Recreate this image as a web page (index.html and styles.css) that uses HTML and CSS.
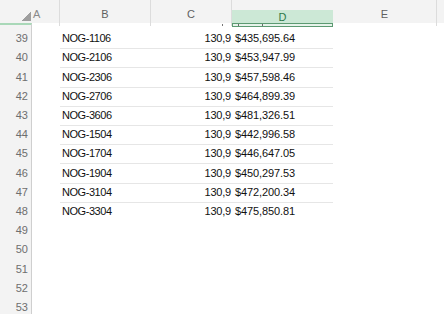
FILE: index.html
```html
<!DOCTYPE html>
<html>
<head>
<meta charset="utf-8">
<link rel="stylesheet" href="styles.css">
</head>
<body>
<div class="sheet">
  <div class="hdr">
    <div class="corner"><span class="tri"></span></div>
    <div class="ch cha">A</div>
    <div class="ch">B</div>
    <div class="ch">C</div>
    <div class="ch chd"><span>D</span></div>
    <div class="ch">E</div>
    <div class="ch last"></div>
  </div>
  <div class="strip">
    <div class="rh38"></div>
    <div class="sc"></div>
    <div class="sc"></div>
    <div class="sc scc"><i class="tick"></i></div>
    <div class="sc sd"><i class="t1"></i><i class="t2"></i></div>
    <div class="sc"></div>
  </div>
  <div class="rows">
    <div class="row g"><div class="rh">39</div><div class="a"></div><div class="b">NOG-1106</div><div class="c">130,9</div><div class="d">$435,695.64</div><div class="e"></div></div>
    <div class="row g"><div class="rh">40</div><div class="a"></div><div class="b">NOG-2106</div><div class="c">130,9</div><div class="d">$453,947.99</div><div class="e"></div></div>
    <div class="row g"><div class="rh">41</div><div class="a"></div><div class="b">NOG-2306</div><div class="c">130,9</div><div class="d">$457,598.46</div><div class="e"></div></div>
    <div class="row g"><div class="rh">42</div><div class="a"></div><div class="b">NOG-2706</div><div class="c">130,9</div><div class="d">$464,899.39</div><div class="e"></div></div>
    <div class="row g"><div class="rh">43</div><div class="a"></div><div class="b">NOG-3606</div><div class="c">130,9</div><div class="d">$481,326.51</div><div class="e"></div></div>
    <div class="row g"><div class="rh">44</div><div class="a"></div><div class="b">NOG-1504</div><div class="c">130,9</div><div class="d">$442,996.58</div><div class="e"></div></div>
    <div class="row g"><div class="rh">45</div><div class="a"></div><div class="b">NOG-1704</div><div class="c">130,9</div><div class="d">$446,647.05</div><div class="e"></div></div>
    <div class="row g"><div class="rh">46</div><div class="a"></div><div class="b">NOG-1904</div><div class="c">130,9</div><div class="d">$450,297.53</div><div class="e"></div></div>
    <div class="row g"><div class="rh">47</div><div class="a"></div><div class="b">NOG-3104</div><div class="c">130,9</div><div class="d">$472,200.34</div><div class="e"></div></div>
    <div class="row"><div class="rh">48</div><div class="a"></div><div class="b">NOG-3304</div><div class="c">130,9</div><div class="d">$475,850.81</div><div class="e"></div></div>
    <div class="row"><div class="rh">49</div></div>
    <div class="row"><div class="rh">50</div></div>
    <div class="row"><div class="rh">51</div></div>
    <div class="row"><div class="rh">52</div></div>
    <div class="row"><div class="rh">53</div></div>
  </div>
</div>
</body>
</html>
```
FILE: styles.css
```css
html, body {
  margin: 0;
  padding: 0;
  background: #fff;
}
.sheet {
  width: 444px;
  height: 314px;
  overflow: hidden;
  font-family: "Liberation Sans", Arial, sans-serif;
  font-size: 11px;
  color: #000;
}
.hdr, .strip, .row {
  display: grid;
  grid-template-columns: 32px 28px 91px 81px 101px 104px 7px;
}
.hdr {
  height: 23px;
  background: #f3f3f3;
}
.corner {
  display: flex;
  justify-content: flex-end;
  align-items: flex-end;
  padding: 0 1px 2px 0;
  box-sizing: border-box;
  height: 23px;
}
.tri {
  display: block;
  width: 10px;
  height: 9px;
  background: linear-gradient(to bottom right, rgba(0,0,0,0) 50%, #9e9e9e 50%);
}
.ch {
  color: #5f5f5f;
  font-size: 11px;
  text-align: center;
  line-height: 23px;
  padding-top: 3px;
  box-sizing: border-box;
  border-right: 1px solid #dcdcdc;
}
.cha {
  text-align: left;
  padding-left: 1px;
  color: #8a8a8a;
}
.chd {
  border-right: none;
  padding-top: 10px;
}
.chd span {
  display: block;
  height: 13px;
  line-height: 14px;
  background: #cce8d6;
  color: #2f7a4a;
}
.last { border-right: none; }
.strip {
  height: 6px;
}
.rh38 {
  background: #f3f3f3;
  border-top: 2px solid #a9d8b8;
  border-right: 1px solid #cfcfcf;
}
.sc { position: relative; }
.sd {
  box-sizing: border-box;
  border: 1.5px solid #5c9a72;
  border-top-width: 1px;
  height: 4px;
  background: #e7f3eb;
}
.sd i {
  position: absolute;
  top: 0;
  width: 1px;
  height: 2px;
  background: #6a6a6a;
}
.sd .t1 { left: 5px; }
.sd .t2 { left: 29px; }
.scc .tick {
  position: absolute;
  right: 9px;
  top: 1px;
  width: 1px;
  height: 2px;
  background: #777;
}
.row {
  height: 19px;
  line-height: 19px;
}
.row:nth-child(5n+3) {
  height: 20px;
  line-height: 20px;
}
.rh {
  background: #f3f3f3;
  color: #6e6e6e;
  text-align: right;
  padding-right: 3px;
  box-sizing: border-box;
  border-right: 1px solid #cfcfcf;
  border-bottom: 1px solid #dadada;
  font-size: 11px;
}
.b, .c, .d {
  box-sizing: border-box;
  color: #111;
}
.b { padding-left: 2px; letter-spacing: -0.45px; }
.c { text-align: right; padding-right: 1px; letter-spacing: -0.2px; }
.d { padding-left: 3px; letter-spacing: -0.1px; }
.g .b, .g .c, .g .d {
  border-bottom: 1px solid #e6e6e6;
}
```
